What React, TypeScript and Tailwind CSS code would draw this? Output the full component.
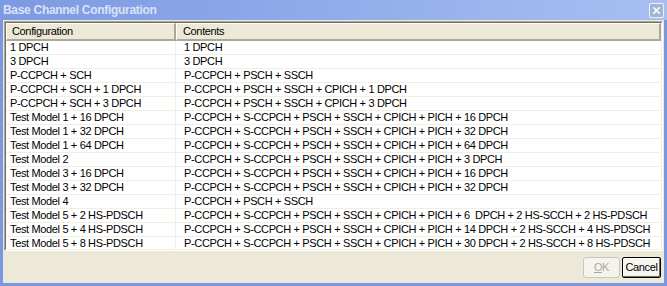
import { X } from "lucide-react";

const rows: [string, string][] = [
  ["1 DPCH", "1 DPCH"],
  ["3 DPCH", "3 DPCH"],
  ["P-CCPCH + SCH", "P-CCPCH + PSCH + SSCH"],
  ["P-CCPCH + SCH + 1 DPCH", "P-CCPCH + PSCH + SSCH + CPICH + 1 DPCH"],
  ["P-CCPCH + SCH + 3 DPCH", "P-CCPCH + PSCH + SSCH + CPICH + 3 DPCH"],
  ["Test Model 1 + 16 DPCH", "P-CCPCH + S-CCPCH + PSCH + SSCH + CPICH + PICH + 16 DPCH"],
  ["Test Model 1 + 32 DPCH", "P-CCPCH + S-CCPCH + PSCH + SSCH + CPICH + PICH + 32 DPCH"],
  ["Test Model 1 + 64 DPCH", "P-CCPCH + S-CCPCH + PSCH + SSCH + CPICH + PICH + 64 DPCH"],
  ["Test Model 2", "P-CCPCH + S-CCPCH + PSCH + SSCH + CPICH + PICH + 3 DPCH"],
  ["Test Model 3 + 16 DPCH", "P-CCPCH + S-CCPCH + PSCH + SSCH + CPICH + PICH + 16 DPCH"],
  ["Test Model 3 + 32 DPCH", "P-CCPCH + S-CCPCH + PSCH + SSCH + CPICH + PICH + 32 DPCH"],
  ["Test Model 4", "P-CCPCH + PSCH + SSCH"],
  ["Test Model 5 + 2 HS-PDSCH", "P-CCPCH + S-CCPCH + PSCH + SSCH + CPICH + PICH + 6  DPCH + 2 HS-SCCH + 2 HS-PDSCH"],
  ["Test Model 5 + 4 HS-PDSCH", "P-CCPCH + S-CCPCH + PSCH + SSCH + CPICH + PICH + 14 DPCH + 2 HS-SCCH + 4 HS-PDSCH"],
  ["Test Model 5 + 8 HS-PDSCH", "P-CCPCH + S-CCPCH + PSCH + SSCH + CPICH + PICH + 30 DPCH + 2 HS-SCCH + 8 HS-PDSCH"],
];

const App = () => {
  return (
    <div
      className="w-[667px] h-[286px] flex flex-col bg-[#7b97e0] text-[11px] text-black tracking-[-0.35px]"
      style={{ fontFamily: "'Liberation Sans', Arial, sans-serif" }}
    >
      {/* title bar */}
      <div className="h-[20px] flex items-center justify-between pl-[3px] pr-[3px] bg-gradient-to-r from-[#7d99e2] to-[#a7bff1]">
        <span className="font-bold text-[12px] text-[#d9e3f7] tracking-[-0.3px]">Base Channel Configuration</span>
        <div className="w-[15px] h-[15px] rounded-[2px] border border-white/80 bg-[#a4b4d8] flex items-center justify-center">
          <X size={11} strokeWidth={3.5} className="text-white" />
        </div>
      </div>

      {/* client area */}
      <div className="flex-1 mx-[3px] mb-[3px] bg-[#ece9d8] flex flex-col px-[1px] pt-[1px]">
        <div className="h-[230px] border-t border-l border-[#aca899] border-r border-b border-r-white border-b-white">
          <div className="h-full border-t border-l border-[#716f64] border-r border-b border-r-[#f1efe2] border-b-[#f1efe2] bg-white overflow-hidden">
            <div className="flex h-[18px] bg-[#ece9d8]">
              <div className="w-[170px] shrink-0 border-t border-l border-white border-r-2 border-b-2 border-r-[#aca899] border-b-[#aca899] pl-[5px] leading-[15px]">
                Configuration
              </div>
              <div className="flex-1 border-t border-l border-white border-r-2 border-b-2 border-r-[#aca899] border-b-[#aca899] pl-[6px] leading-[15px]">
                Contents
              </div>
            </div>
            {rows.map(([c, d]) => (
              <div key={c} className="flex h-[14px] border-b border-[#f1efe2] leading-[13px]">
                <div className="w-[170px] shrink-0 pl-[4px] border-r border-[#f1efe2] whitespace-pre">{c}</div>
                <div className="flex-1 pl-[8px] whitespace-pre">{d}</div>
              </div>
            ))}
          </div>
        </div>

        <div className="flex justify-end gap-[2px] mt-[6px] pr-[2px]">
          <button
            disabled
            className="w-[37px] h-[21px] px-0 border border-[#c9c7ba] rounded-[3px] bg-[#f4f3ee] text-[#aca899]"
          >
            <span className="underline">O</span>K
          </button>
          <button className="w-[39px] h-[21px] px-0 border border-black rounded-[2px] bg-[#f5f4ef] text-black shadow-[inset_-1px_-1px_0_#716f64,inset_1px_1px_0_#ffffff]">
            Cancel
          </button>
        </div>
      </div>
    </div>
  );
};

export default App;
